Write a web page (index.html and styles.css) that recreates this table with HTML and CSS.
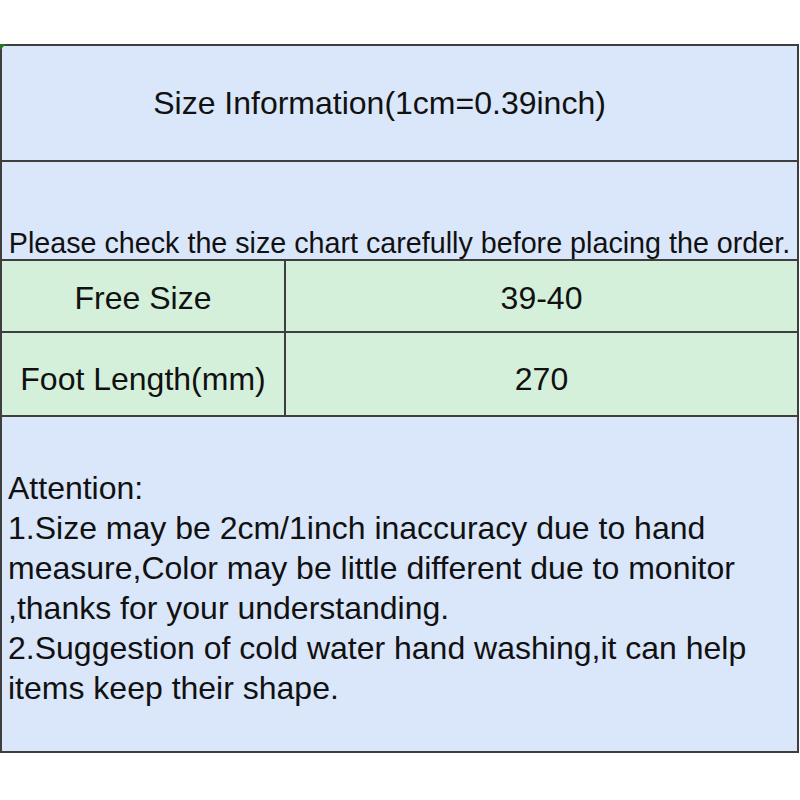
FILE: index.html
```html
<!DOCTYPE html>
<html>
<head>
<meta charset="utf-8">
<link rel="stylesheet" href="styles.css">
</head>
<body>
<div class="sheet">
  <span class="corner"></span>
  <div class="title">Size Information(1cm=0.39inch)</div>
  <div class="note">Please check the size chart carefully before placing the order.</div>
  <div class="row row-a">
    <div class="cell label">Free Size</div>
    <div class="cell value">39-40</div>
  </div>
  <div class="row row-b">
    <div class="cell label">Foot Length(mm)</div>
    <div class="cell value">270</div>
  </div>
  <div class="attention">
    Attention:<br>
    1.Size may be 2cm/1inch inaccuracy due to hand<br>
    measure,Color may be little different due to monitor<br>
    ,thanks for your understanding.<br>
    2.Suggestion of cold water hand washing,it can help<br>
    items keep their shape.
  </div>
</div>
</body>
</html>
```
FILE: styles.css
```css
html, body {
  margin: 0;
  padding: 0;
  background: #ffffff;
}
body {
  padding-top: 44px;
  font-family: "Liberation Sans", Arial, sans-serif;
  color: #111111;
}
.sheet {
  position: relative;
  width: 795px;
  border: 2px solid #3e3e3e;
  background: #dae6fa;
}
.corner {
  position: absolute;
  left: -2px;
  top: -2px;
  width: 0;
  height: 0;
  border-top: 6px solid #1e7a1e;
  border-right: 6px solid transparent;
}
.title {
  height: 116px;
  box-sizing: border-box;
  padding-right: 40px;
  border-bottom: 2px solid #3e3e3e;
  display: flex;
  align-items: center;
  justify-content: center;
  font-size: 32px;
}
.note {
  height: 97px;
  border-bottom: 2px solid #3e3e3e;
  display: flex;
  align-items: flex-end;
  justify-content: center;
  font-size: 28.7px;
  line-height: 31px;
  padding-bottom: 0;
}
.row {
  display: grid;
  grid-template-columns: 284px 1fr;
  background: #d4f0da;
  border-bottom: 2px solid #3e3e3e;
}
.row-a { height: 70px; }
.row-b { height: 82px; }
.cell {
  display: flex;
  align-items: center;
  justify-content: center;
  font-size: 32px;
  box-sizing: border-box;
}
.label {
  border-right: 2px solid #3e3e3e;
}
.row-a .cell {
  padding-top: 5px;
}
.row-b .cell {
  padding-top: 10px;
}
.attention {
  height: 334px;
  box-sizing: border-box;
  padding: 51px 0 0 6px;
  font-size: 32px;
  line-height: 40px;
}
```
